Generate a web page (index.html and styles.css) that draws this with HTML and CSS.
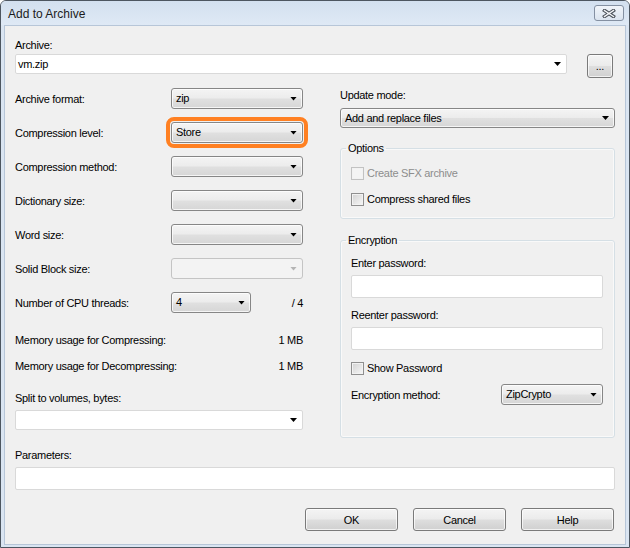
FILE: index.html
```html
<!DOCTYPE html>
<html lang="en">
<head>
  <meta charset="UTF-8">
  <title>Add to Archive</title>
  <link rel="stylesheet" href="styles.css">
</head>
<body>
  <div class="window">
    <div class="titlebar">
      <span class="title">Add to Archive</span>
      <button class="close">
        <svg width="14" height="9" viewBox="0 0 14 9">
          <path d="M2.5 1.5 L11.5 7.5 M11.5 1.5 L2.5 7.5" stroke="#4a5058" stroke-width="3.4" stroke-linecap="square" fill="none"/>
          <path d="M2.5 1.5 L11.5 7.5 M11.5 1.5 L2.5 7.5" stroke="#f4f6f9" stroke-width="1.4" stroke-linecap="square" fill="none"/>
        </svg>
      </button>
    </div>

    <div class="client">
      <div class="label archive-label">Archive:</div>
      <div class="archive-row">
        <div class="edit-combo archive-combo"><span>vm.zip</span><i class="arrow"></i></div>
        <button class="btn browse">...</button>
      </div>

      <div class="columns">
        <div class="left">
          <div class="settings">
            <span>Archive format:</span>
            <div class="combo"><span>zip</span><i class="arrow"></i></div>
            <span>Compression level:</span>
            <div class="combo marked"><span>Store</span><i class="arrow"></i></div>
            <span>Compression method:</span>
            <div class="combo"><span></span><i class="arrow"></i></div>
            <span>Dictionary size:</span>
            <div class="combo"><span></span><i class="arrow"></i></div>
            <span>Word size:</span>
            <div class="combo"><span></span><i class="arrow"></i></div>
            <span>Solid Block size:</span>
            <div class="combo disabled"><span></span><i class="arrow"></i></div>
            <span>Number of CPU threads:</span>
            <div class="threads">
              <div class="combo small"><span>4</span><i class="arrow"></i></div>
              <span>/ 4</span>
            </div>
          </div>

          <div class="memory">
            <div class="memory-row"><span>Memory usage for Compressing:</span><span>1 MB</span></div>
            <div class="memory-row"><span>Memory usage for Decompressing:</span><span>1 MB</span></div>
          </div>

          <div class="label split-label">Split to volumes, bytes:</div>
          <div class="edit-combo"><span></span><i class="arrow"></i></div>
        </div>

        <div class="right">
          <div class="label update-label">Update mode:</div>
          <div class="combo update"><span>Add and replace files</span><i class="arrow"></i></div>

          <fieldset class="group options">
            <legend>Options</legend>
            <div class="check-row disabled"><i class="check"></i><span>Create SFX archive</span></div>
            <div class="check-row"><i class="check"></i><span>Compress shared files</span></div>
          </fieldset>

          <fieldset class="group encryption">
            <legend>Encryption</legend>
            <div class="label">Enter password:</div>
            <div class="textbox"></div>
            <div class="label reenter">Reenter password:</div>
            <div class="textbox"></div>
            <div class="check-row show-pass"><i class="check"></i><span>Show Password</span></div>
            <div class="method-row">
              <span>Encryption method:</span>
              <div class="combo method"><span>ZipCrypto</span><i class="arrow"></i></div>
            </div>
          </fieldset>
        </div>
      </div>

      <div class="label params-label">Parameters:</div>
      <div class="textbox"></div>

      <div class="buttons">
        <button class="btn">OK</button>
        <button class="btn">Cancel</button>
        <button class="btn">Help</button>
      </div>
    </div>
  </div>
</body>
</html>
```

FILE: styles.css
```css
* {
  box-sizing: border-box;
}

body {
  margin: 0;
  background: #fff;
  font-family: "Liberation Sans", Arial, sans-serif;
  font-size: 11px;
  letter-spacing: -0.3px;
  color: #000;
}

.window {
  width: 630px;
  height: 548px;
  border: 1px solid #4d5660;
  border-radius: 6px 6px 0 0;
  background: #dae5f2;
  overflow: hidden;
}

.titlebar {
  height: 24px;
  display: flex;
  justify-content: space-between;
  align-items: flex-start;
  background: linear-gradient(#d3e0ef, #dfe9f5);
}

.title {
  font-size: 12px;
  letter-spacing: 0;
  line-height: 15px;
  padding: 6px 0 0 7px;
  color: #1b1b1b;
}

.close {
  width: 30px;
  height: 16px;
  margin: 4px 5px 0 0;
  padding: 0;
  border: 1px solid #8490a2;
  border-radius: 3px;
  background: linear-gradient(#f1f5fa, #dbe4ef);
  display: flex;
  align-items: center;
  justify-content: center;
}

.client {
  margin: 0 3px;
  height: 520px;
  border: 1px solid #b7c6d8;
  background: #f0f0f0;
  padding: 12px 10px 0;
}

.label {
  line-height: 15px;
  margin-bottom: 4px;
}

.archive-label {
  margin-bottom: 1px;
}

.archive-row {
  display: flex;
  align-items: flex-start;
}

.archive-combo {
  width: 552px;
}

.browse {
  width: 26px;
  height: 24px;
  margin-left: 20px;
  padding-top: 4px;
  color: #5a2a6a;
}

/* dropdowns */
.combo,
.edit-combo {
  height: 21px;
  display: flex;
  align-items: center;
  justify-content: space-between;
  padding: 0 5px 0 4px;
  line-height: 15px;
  white-space: nowrap;
}

.combo {
  border: 1px solid #868686;
  border-radius: 3px;
  background: linear-gradient(#f4f4f4 0%, #ececec 48%, #e0e0e0 52%, #d6d6d6 100%);
  box-shadow: inset 0 0 0 1px rgba(255, 255, 255, 0.75);
}

.edit-combo {
  height: 20px;
  border: 1px solid #d9d9d9;
  border-radius: 2px;
  background: #fff;
  padding-left: 2px;
}

.arrow {
  width: 7px;
  height: 4px;
  background: #000;
  clip-path: polygon(0 0, 100% 0, 50% 100%);
}

.combo.disabled {
  border-color: #c4c4c4;
  background: #f3f3f3;
  box-shadow: none;
}

.combo.disabled .arrow {
  background: #b4b4b4;
}

.combo.marked {
  outline: 4px solid #ff8022;
  outline-offset: 1px;
}

.textbox {
  height: 23px;
  border: 1px solid #d9d9d9;
  border-radius: 2px;
  background: #fff;
}

/* layout */
.columns {
  display: grid;
  grid-template-columns: 288px 275px;
  column-gap: 37px;
  align-items: start;
  margin-top: 10px;
}

.settings {
  display: grid;
  grid-template-columns: 156px 132px;
  grid-auto-rows: 21px;
  row-gap: 13px;
  align-items: center;
}

.threads {
  display: flex;
  align-items: center;
  justify-content: space-between;
}

.combo.small {
  width: 80px;
}

.memory {
  margin-top: 20px;
}

.memory-row {
  display: flex;
  justify-content: space-between;
  line-height: 15px;
}

.memory-row + .memory-row {
  margin-top: 11px;
}

.split-label {
  margin-top: 17px;
}

.update-label {
  margin-bottom: 5px;
}

.combo.update {
  height: 20px;
}

.group {
  margin: 13px 0 0;
  min-width: 0;
  padding: 10px 11px 11px 10px;
  border: 1px solid #d5dfe5;
  border-radius: 3px;
  box-shadow: inset 0 0 0 1px rgba(255, 255, 255, 0.6);
}

.group legend {
  padding: 0 2px;
  margin-left: -5px;
  line-height: 15px;
}

.encryption {
  margin-top: 14px;
  padding-top: 8px;
  padding-bottom: 32px;
}

.check-row {
  display: flex;
  align-items: center;
  gap: 3px;
  line-height: 15px;
}

.check-row + .check-row {
  margin-top: 11px;
}

.check {
  width: 13px;
  height: 13px;
  border: 1px solid #8f8f8f;
  background: linear-gradient(135deg, #d2d2d2, #f7f7f7);
  box-shadow: inset 0 0 0 1px #f2f2f2;
}

.check-row.disabled {
  color: #8d8d8d;
}

.check-row.disabled .check {
  border-color: #c2c2c2;
  background: #f4f4f4;
}

.reenter {
  margin-top: 10px;
}

.show-pass {
  margin-top: 11px;
}

.method-row {
  display: flex;
  align-items: center;
  justify-content: space-between;
  margin-top: 8px;
}

.combo.method {
  width: 102px;
}

.params-label {
  margin-top: 10px;
}

/* buttons */
.btn {
  font: inherit;
  letter-spacing: inherit;
  color: #000;
  border: 1px solid #7a7a7a;
  border-radius: 3px;
  background: linear-gradient(#f4f4f4 0%, #ebebeb 48%, #dedede 52%, #d0d0d0 100%);
  box-shadow: inset 0 0 0 1px rgba(255, 255, 255, 0.7);
  padding: 0;
}

.buttons {
  display: flex;
  justify-content: flex-end;
  gap: 15px;
  margin-top: 18px;
  padding-right: 1px;
}

.buttons .btn {
  width: 93px;
  height: 23px;
}
```
